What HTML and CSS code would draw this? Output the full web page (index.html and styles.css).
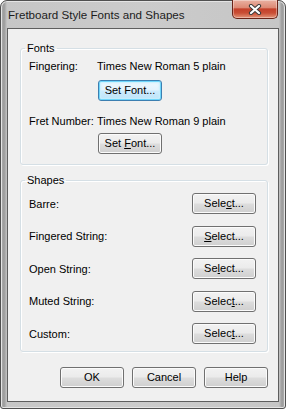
FILE: index.html
```html
<!DOCTYPE html>
<html lang="en">
<head>
    <title>Fretboard Style Fonts and Shapes</title>
    <link rel="stylesheet" href="styles.css">
</head>
<body>
    <div class="window">
        <div class="titlebar">
            <span class="title">Fretboard Style Fonts and Shapes</span>
            <button class="close-btn" title="Close">
                <svg width="14" height="11" viewBox="0 0 14 11">
                    <path d="M3 2 L11 9 M11 2 L3 9" stroke="#3b3b3b" stroke-width="4.2" stroke-linecap="round"/>
                    <path d="M3 2 L11 9 M11 2 L3 9" stroke="#ffffff" stroke-width="2.2" stroke-linecap="round"/>
                </svg>
            </button>
        </div>

        <div class="client">
            <fieldset class="group group-fonts">
                <legend>Fonts</legend>
                <div class="font-row">
                    <span class="label">Fingering:</span>
                    <span class="value">Times New Roman 5 plain</span>
                </div>
                <button class="btn btn-focus set-font">Set Font...</button>
                <div class="font-row font-row-second">
                    <span class="label">Fret Number:</span>
                    <span class="value">Times New Roman 9 plain</span>
                </div>
                <button class="btn set-font set-font-second">Set <u>F</u>ont...</button>
            </fieldset>

            <fieldset class="group group-shapes">
                <legend>Shapes</legend>
                <div class="shape-row">
                    <span>Barre:</span>
                    <button class="btn">Sele<u>c</u>t...</button>
                </div>
                <div class="shape-row">
                    <span>Fingered String:</span>
                    <button class="btn"><u>S</u>elect...</button>
                </div>
                <div class="shape-row">
                    <span>Open String:</span>
                    <button class="btn">Se<u>l</u>ect...</button>
                </div>
                <div class="shape-row">
                    <span>Muted String:</span>
                    <button class="btn">Selec<u>t</u>...</button>
                </div>
                <div class="shape-row">
                    <span>Custom:</span>
                    <button class="btn">Selec<u>t</u>...</button>
                </div>
            </fieldset>

            <div class="actions">
                <button class="btn">OK</button>
                <button class="btn">Cancel</button>
                <button class="btn">Help</button>
            </div>
        </div>
    </div>
</body>
</html>
```

FILE: styles.css
```css
html, body {
    margin: 0;
    padding: 0;
}

body {
    width: 286px;
    height: 409px;
    font-family: "Liberation Sans", Arial, sans-serif;
    font-size: 11px;
    color: #000;
    background: #ffffff;
}

.window {
    box-sizing: border-box;
    width: 286px;
    height: 409px;
    padding: 0 6px 6px;
    border: 1px solid #505050;
    border-radius: 7px 7px 3px 3px;
    background: linear-gradient(90deg, #b4b4b4 0px, #9a9a9a 3px, #c6c6c6 6px, #cbcbcb 50%, #c6c6c6 calc(100% - 6px), #9a9a9a calc(100% - 3px), #b4b4b4 100%);
    box-shadow: inset 0 0 0 1px #e4e4e4;
    display: flex;
    flex-direction: column;
}

.titlebar {
    height: 27px;
    display: flex;
    justify-content: space-between;
    align-items: flex-start;
}

.title {
    margin: 7px 0 0 1px;
    font-size: 11.6px;
    line-height: 14px;
    color: #1c1c1c;
}

.close-btn {
    box-sizing: border-box;
    width: 46px;
    height: 19px;
    margin: -1px 1px 0 0;
    padding: 0;
    border: 1px solid #6a2418;
    border-top: none;
    border-radius: 0 0 5px 5px;
    background: linear-gradient(#eab1a2 0%, #dd8a75 42%, #c4402a 50%, #c94e35 72%, #e39579 100%);
    box-shadow: inset 0 0 0 1px rgba(255, 255, 255, 0.35);
    display: flex;
    align-items: center;
    justify-content: center;
}

.client {
    flex: 1;
    border: 1px solid #5e5e5e;
    background: #f0f0f0;
    padding: 0 10px 0 12px;
    display: flex;
    flex-direction: column;
}

.group {
    margin: 0;
    padding: 0 11px 0 8px;
    border: 1px solid #d5dfe5;
    border-radius: 3px;
    box-shadow: 1px 1px 0 #ffffff, inset 1px 1px 0 #ffffff;
    min-width: 0;
}

.group legend {
    margin-left: -4px;
    padding: 0 2px;
    line-height: 14px;
    color: #000;
}

.group-fonts {
    margin-top: 12px;
    padding-top: 4px;
    padding-bottom: 10px;
}

.font-row {
    display: flex;
    line-height: 14px;
    height: 14px;
}

.font-row .label {
    width: 68px;
    flex: none;
}

.font-row-second {
    margin-top: 13px;
}

.set-font {
    margin: 7px 0 0 69px;
}

.set-font-second {
    margin-top: 5px;
}

.group-shapes {
    margin-top: 8px;
    padding-top: 6px;
    padding-bottom: 7px;
    display: flex;
    flex-direction: column;
    gap: 11.5px;
}

.shape-row {
    display: flex;
    justify-content: space-between;
    align-items: center;
    height: 21px;
}

.actions {
    margin-top: 15px;
    display: flex;
    justify-content: flex-end;
    gap: 8px;
}

.btn {
    box-sizing: border-box;
    width: 64px;
    height: 21px;
    padding: 0;
    border: 1px solid #707070;
    border-radius: 3px;
    background: linear-gradient(#f2f2f2 0%, #ebebeb 48%, #dddddd 52%, #cfcfcf 100%);
    box-shadow: inset 0 0 0 1px #fbfbfb;
    font-family: "Liberation Sans", Arial, sans-serif;
    font-size: 11px;
    line-height: 19px;
    color: #000;
    text-align: center;
    flex: none;
}

.btn u {
    text-decoration: underline;
    text-underline-offset: 1px;
}

.btn-focus {
    border-color: #3c7fb1;
    background: linear-gradient(#eef8fe 0%, #e3f3fd 48%, #cdebfc 52%, #bce2f8 100%);
    box-shadow: inset 0 0 0 1px #6fd6fb, inset 0 0 2px 2px #c8effd;
}
```
